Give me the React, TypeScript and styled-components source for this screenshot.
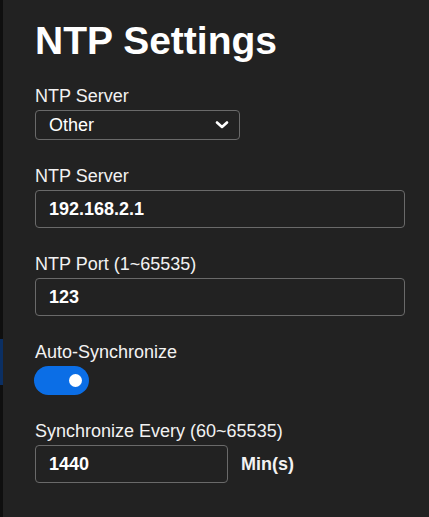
import { useState } from 'react'
import styled, { createGlobalStyle } from 'styled-components'

const GlobalStyle = createGlobalStyle`
  html, body, #root {
    margin: 0;
    height: 100%;
  }
  body {
    background: #0f0f0f;
    font-family: 'Liberation Sans', Arial, sans-serif;
    overflow: hidden;
  }
`

const App = () => {
  const [server, setServer] = useState('192.168.2.1')
  const [port, setPort] = useState('123')
  const [every, setEvery] = useState('1440')
  const [autoSync, setAutoSync] = useState(true)

  return (
    <>
      <GlobalStyle />
      <Page>
        <Backdrop>
          <BackdropItem />
        </Backdrop>
        <Panel>
          <Title>NTP Settings</Title>
          <Form>
            <Field>
              <Label>NTP Server</Label>
              <SelectBox>
                <Select defaultValue="Other">
                  <option>pool.ntp.org</option>
                  <option>time.google.com</option>
                  <option>Other</option>
                </Select>
                <Chevron viewBox="0 0 14 8">
                  <path
                    d="M2 1.5 L7 6 L12 1.5"
                    fill="none"
                    stroke="#fff"
                    strokeWidth="2.6"
                    strokeLinecap="round"
                    strokeLinejoin="round"
                  />
                </Chevron>
              </SelectBox>
            </Field>
            <Field>
              <Label>NTP Server</Label>
              <Input value={server} onChange={(e) => setServer(e.target.value)} />
            </Field>
            <Field>
              <Label>NTP Port (1~65535)</Label>
              <Input value={port} onChange={(e) => setPort(e.target.value)} />
            </Field>
            <Field $space={26}>
              <Label>Auto-Synchronize</Label>
              <Toggle
                type="button"
                $on={autoSync}
                onClick={() => setAutoSync(!autoSync)}
              >
                <Knob $on={autoSync} />
              </Toggle>
            </Field>
            <Field $space={26}>
              <Label>Synchronize Every (60~65535)</Label>
              <Row>
                <Input
                  $width={193}
                  value={every}
                  onChange={(e) => setEvery(e.target.value)}
                />
                <Unit>Min(s)</Unit>
              </Row>
            </Field>
          </Form>
        </Panel>
      </Page>
    </>
  )
}

const Page = styled.div`
  display: flex;
  height: 100%;
`

const Backdrop = styled.div`
  width: 3px;
  flex-shrink: 0;
  background: #0f0f0f;
  padding-top: 339px;
  box-sizing: border-box;
`

const BackdropItem = styled.div`
  height: 46px;
  background: #0b2f63;
`

const Panel = styled.div`
  flex: 1;
  background: #222222;
  padding: 19px 24px 0 32px;
  box-sizing: border-box;
`

const Title = styled.h1`
  margin: 0 0 23px;
  font-size: 39px;
  line-height: 44px;
  font-weight: 700;
  color: #ffffff;
`

const Form = styled.div`
  display: flex;
  flex-direction: column;
`

const Field = styled.div<{ $space?: number }>`
  display: flex;
  flex-direction: column;
  align-items: flex-start;
  gap: 4px;
  & + & {
    margin-top: ${(p) => p.$space ?? 27}px;
  }
`

const Label = styled.label`
  font-size: 18px;
  line-height: 20px;
  color: #f2f2f2;
`

const SelectBox = styled.div`
  position: relative;
  width: 205px;
  height: 30px;
`

const Select = styled.select`
  appearance: none;
  width: 100%;
  height: 100%;
  margin: 0;
  padding: 0 30px 0 13px;
  box-sizing: border-box;
  background: #222222;
  border: 1px solid #6a6a6a;
  border-radius: 4px;
  color: #ffffff;
  font-family: 'Liberation Sans', Arial, sans-serif;
  font-size: 18px;
  outline: none;
`

const Chevron = styled.svg`
  position: absolute;
  right: 11px;
  top: 11px;
  width: 14px;
  height: 8px;
  pointer-events: none;
`

const Input = styled.input<{ $width?: number }>`
  width: ${(p) => p.$width ?? 370}px;
  height: 38px;
  margin: 0;
  padding: 0 13px;
  box-sizing: border-box;
  background: #222222;
  border: 1px solid #6a6a6a;
  border-radius: 4px;
  color: #ffffff;
  font-family: 'Liberation Sans', Arial, sans-serif;
  font-size: 18px;
  font-weight: 700;
  outline: none;
`

const Toggle = styled.button<{ $on: boolean }>`
  position: relative;
  width: 55px;
  height: 29px;
  margin: 0 0 0 -1px;
  padding: 0;
  border: none;
  border-radius: 15px;
  background: ${(p) => (p.$on ? '#0b6ee6' : '#555555')};
  cursor: pointer;
`

const Knob = styled.span<{ $on: boolean }>`
  position: absolute;
  top: 8px;
  left: ${(p) => (p.$on ? '35px' : '7px')};
  width: 13px;
  height: 13px;
  border-radius: 50%;
  background: #ffffff;
`

const Row = styled.div`
  display: flex;
  align-items: center;
  gap: 13px;
`

const Unit = styled.span`
  font-size: 18px;
  font-weight: 700;
  color: #f2f2f2;
`

export default App
